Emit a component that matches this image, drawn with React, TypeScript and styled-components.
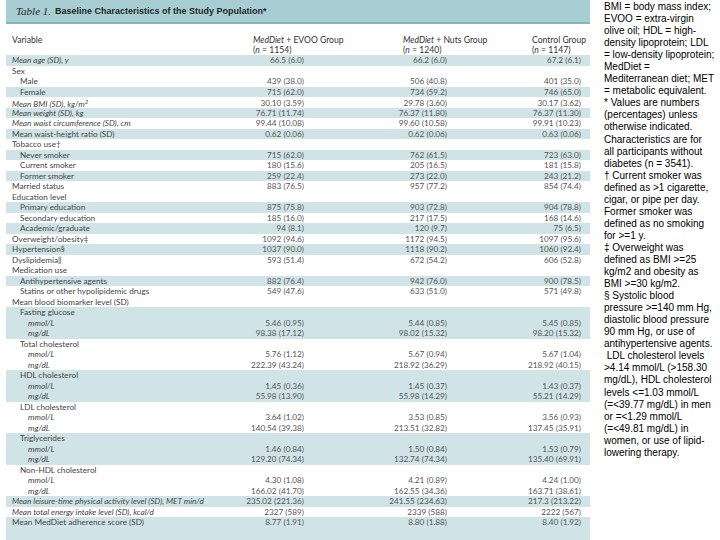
import React from "react";
import styled, { createGlobalStyle } from "styled-components";

const GlobalStyle = createGlobalStyle`
  html, body { margin: 0; padding: 0; background: #ffffff; }
  #root { width: 720px; height: 540px; }
`;

const Page = styled.div`
  display: flex;
  width: 720px;
  height: 540px;
  overflow: hidden;
  background: #ffffff;
`;

const TablePanel = styled.div`
  margin-left: 6px;
  width: 584px;
  display: flex;
  flex-direction: column;
  font-family: Lato, "Open Sans", sans-serif;
  color: #4a4a4a;
`;

const TitleBar = styled.div`
  height: 22px;
  background: #a6ced3;
  border-bottom: 2px solid #86b6bc;
  display: flex;
  align-items: center;
  padding-left: 10px;
  gap: 4px;
  color: #262626;
`;

const TableNo = styled.span`
  font-family: "Liberation Serif", serif;
  font-style: italic;
  font-size: 11px;
`;

const TitleText = styled.span`
  font-family: "Liberation Sans", Arial, sans-serif;
  font-weight: bold;
  font-size: 9px;
`;

const HeaderRow = styled.div`
  display: grid;
  grid-template-columns: 247px 150px 129px 1fr;
  padding: 11px 0 0;
  font-size: 8.6px;
  line-height: 10px;
  color: #333333;
`;

const HeadCell = styled.div<{ $first?: boolean }>`
  padding-left: ${(p) => (p.$first ? "6px" : "0")};
  display: flex;
  flex-direction: column;
`;

const HeadLine = styled.div`
  height: 10px;
  white-space: nowrap;
`;

const Em = styled.i`
  font-style: italic;
`;

const DataRow = styled.div<{ $shade: boolean }>`
  display: grid;
  grid-template-columns: 230px 68px 143px 134px 9px;
  height: 10.5px;
  align-items: center;
  font-size: 8.2px;
  line-height: 10px;
  background: ${(p) => (p.$shade ? "#d0e4e7" : "#ffffff")};
`;

const Label = styled.div<{ $level: number; $italic: boolean }>`
  padding-left: ${(p) => 6 + p.$level * 8}px;
  font-style: ${(p) => (p.$italic ? "italic" : "normal")};
  white-space: nowrap;
  color: #454545;
`;

const Value = styled.div`
  text-align: right;
  white-space: nowrap;
  color: #555555;
`;

const Filler = styled.div`
  flex: 1;
  background: #d0e4e7;
`;

const Notes = styled.div`
  margin-left: 14px;
  width: 116px;
  padding-top: 1px;
  font-family: "Liberation Sans", Arial, sans-serif;
  font-size: 10px;
  line-height: 12.05px;
  color: #000000;
`;

const NoteLine = styled.div`
  white-space: nowrap;
`;

type Row = {
  label: React.ReactNode;
  level?: number;
  italic?: boolean;
  v?: [string, string, string];
  s: boolean;
};

const rows: Row[] = [
  { label: "Mean age (SD), y", italic: true, v: ["66.5 (6.0)", "66.2 (6.0)", "67.2 (6.1)"], s: true },
  { label: "Sex", s: false },
  { label: "Male", level: 1, v: ["439 (38.0)", "506 (40.8)", "401 (35.0)"], s: false },
  { label: "Female", level: 1, v: ["715 (62.0)", "734 (59.2)", "746 (65.0)"], s: true },
  { label: <>Mean BMI (SD), kg/m<sup style={{ fontSize: "6px", verticalAlign: "3px" }}>2</sup></>, italic: true, v: ["30.10 (3.59)", "29.78 (3.60)", "30.17 (3.62)"], s: false },
  { label: "Mean weight (SD), kg", italic: true, v: ["76.71 (11.74)", "76.37 (11.80)", "76.37 (11.30)"], s: true },
  { label: "Mean waist circumference (SD), cm", italic: true, v: ["99.44 (10.08)", "99.60 (10.58)", "99.91 (10.23)"], s: false },
  { label: "Mean waist-height ratio (SD)", v: ["0.62 (0.06)", "0.62 (0.06)", "0.63 (0.06)"], s: true },
  { label: "Tobacco use†", s: false },
  { label: "Never smoker", level: 1, v: ["715 (62.0)", "762 (61.5)", "723 (63.0)"], s: true },
  { label: "Current smoker", level: 1, v: ["180 (15.6)", "205 (16.5)", "181 (15.8)"], s: false },
  { label: "Former smoker", level: 1, v: ["259 (22.4)", "273 (22.0)", "243 (21.2)"], s: true },
  { label: "Married status", v: ["883 (76.5)", "957 (77.2)", "854 (74.4)"], s: false },
  { label: "Education level", s: false },
  { label: "Primary education", level: 1, v: ["875 (75.8)", "903 (72.8)", "904 (78.8)"], s: true },
  { label: "Secondary education", level: 1, v: ["185 (16.0)", "217 (17.5)", "168 (14.6)"], s: false },
  { label: "Academic/graduate", level: 1, v: ["94 (8.1)", "120 (9.7)", "75 (6.5)"], s: true },
  { label: "Overweight/obesity‡", v: ["1092 (94.6)", "1172 (94.5)", "1097 (95.6)"], s: false },
  { label: "Hypertension§", v: ["1037 (90.0)", "1118 (90.2)", "1060 (92.4)"], s: true },
  { label: "Dyslipidemia‖", v: ["593 (51.4)", "672 (54.2)", "606 (52.8)"], s: false },
  { label: "Medication use", s: false },
  { label: "Antihypertensive agents", level: 1, v: ["882 (76.4)", "942 (76.0)", "900 (78.5)"], s: true },
  { label: "Statins or other hypolipidemic drugs", level: 1, v: ["549 (47.6)", "633 (51.0)", "571 (49.8)"], s: false },
  { label: "Mean blood biomarker level (SD)", s: false },
  { label: "Fasting glucose", level: 1, s: true },
  { label: "mmol/L", level: 2, italic: true, v: ["5.46 (0.95)", "5.44 (0.85)", "5.45 (0.85)"], s: true },
  { label: "mg/dL", level: 2, italic: true, v: ["98.38 (17.12)", "98.02 (15.32)", "98.20 (15.32)"], s: true },
  { label: "Total cholesterol", level: 1, s: false },
  { label: "mmol/L", level: 2, italic: true, v: ["5.76 (1.12)", "5.67 (0.94)", "5.67 (1.04)"], s: false },
  { label: "mg/dL", level: 2, italic: true, v: ["222.39 (43.24)", "218.92 (36.29)", "218.92 (40.15)"], s: false },
  { label: "HDL cholesterol", level: 1, s: true },
  { label: "mmol/L", level: 2, italic: true, v: ["1.45 (0.36)", "1.45 (0.37)", "1.43 (0.37)"], s: true },
  { label: "mg/dL", level: 2, italic: true, v: ["55.98 (13.90)", "55.98 (14.29)", "55.21 (14.29)"], s: true },
  { label: "LDL cholesterol", level: 1, s: false },
  { label: "mmol/L", level: 2, italic: true, v: ["3.64 (1.02)", "3.53 (0.85)", "3.56 (0.93)"], s: false },
  { label: "mg/dL", level: 2, italic: true, v: ["140.54 (39.38)", "213.51 (32.82)", "137.45 (35.91)"], s: false },
  { label: "Triglycerides", level: 1, s: true },
  { label: "mmol/L", level: 2, italic: true, v: ["1.46 (0.84)", "1.50 (0.84)", "1.53 (0.79)"], s: true },
  { label: "mg/dL", level: 2, italic: true, v: ["129.20 (74.34)", "132.74 (74.34)", "135.40 (69.91)"], s: true },
  { label: "Non-HDL cholesterol", level: 1, s: false },
  { label: "mmol/L", level: 2, italic: true, v: ["4.30 (1.08)", "4.21 (0.89)", "4.24 (1.00)"], s: false },
  { label: "mg/dL", level: 2, italic: true, v: ["166.02 (41.70)", "162.55 (34.36)", "163.71 (38.61)"], s: false },
  { label: "Mean leisure-time physical activity level (SD), MET min/d", italic: true, v: ["235.02 (221.36)", "241.55 (234.63)", "217.3 (213.22)"], s: true },
  { label: "Mean total energy intake level (SD), kcal/d", italic: true, v: ["2327 (589)", "2339 (588)", "2222 (567)"], s: false },
  { label: "Mean MedDiet adherence score (SD)", v: ["8.77 (1.91)", "8.80 (1.88)", "8.40 (1.92)"], s: true },
];

const notes = [
  "BMI = body mass index;",
  "EVOO = extra-virgin",
  "olive oil; HDL = high-",
  "density lipoprotein; LDL",
  "= low-density lipoprotein;",
  "MedDiet =",
  "Mediterranean diet; MET",
  "= metabolic equivalent.",
  "* Values are numbers",
  "(percentages) unless",
  "otherwise indicated.",
  "Characteristics are for",
  "all participants without",
  "diabetes (n = 3541).",
  "† Current smoker was",
  "defined as >1 cigarette,",
  "cigar, or pipe per day.",
  "Former smoker was",
  "defined as no smoking",
  "for >=1 y.",
  "‡ Overweight was",
  "defined as BMI >=25",
  "kg/m2 and obesity as",
  "BMI >=30 kg/m2.",
  "§ Systolic blood",
  "pressure >=140 mm Hg,",
  "diastolic blood pressure",
  "90 mm Hg, or use of",
  "antihypertensive agents.",
  "\u00a0LDL cholesterol levels",
  ">4.14 mmol/L (>158.30",
  "mg/dL), HDL cholesterol",
  "levels <=1.03 mmol/L",
  "(=<39.77 mg/dL) in men",
  "or =<1.29 mmol/L",
  "(=<49.81 mg/dL) in",
  "women, or use of lipid-",
  "lowering therapy.",
];

const groups = [
  { name: "EVOO Group", n: "1154", med: true },
  { name: "Nuts Group", n: "1240", med: true },
  { name: "Control Group", n: "1147", med: false },
];

export default function App() {
  return (
    <>
      <GlobalStyle />
      <Page>
        <TablePanel>
          <TitleBar>
            <TableNo>Table 1.</TableNo>
            <TitleText>Baseline Characteristics of the Study Population*</TitleText>
          </TitleBar>
          <HeaderRow>
            <HeadCell $first>
              <HeadLine>Variable</HeadLine>
            </HeadCell>
            {groups.map((g) => (
              <HeadCell key={g.name}>
                <HeadLine>
                  {g.med ? (
                    <>
                      <Em>MedDiet</Em> + {g.name}
                    </>
                  ) : (
                    g.name
                  )}
                </HeadLine>
                <HeadLine>
                  (<Em>n</Em> = {g.n})
                </HeadLine>
              </HeadCell>
            ))}
          </HeaderRow>
          {rows.map((r, i) => (
            <DataRow key={i} $shade={r.s}>
              <Label $level={r.level ?? 0} $italic={!!r.italic}>
                {r.label}
              </Label>
              <Value>{r.v ? r.v[0] : ""}</Value>
              <Value>{r.v ? r.v[1] : ""}</Value>
              <Value>{r.v ? r.v[2] : ""}</Value>
              <div />
            </DataRow>
          ))}
          <Filler />
        </TablePanel>
        <Notes>
          {notes.map((n, i) => (
            <NoteLine key={i}>{n}</NoteLine>
          ))}
        </Notes>
      </Page>
    </>
  );
}
